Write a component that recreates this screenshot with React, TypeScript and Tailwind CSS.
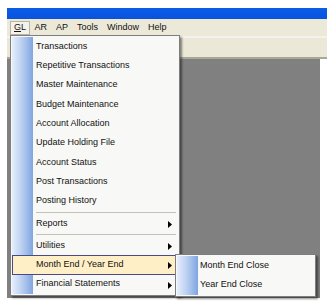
import { type ReactNode } from "react"

const FONT = { fontFamily: '"Liberation Sans", Arial, sans-serif' }

const TOP_MENUS = ["AR", "AP", "Tools", "Window", "Help"]

type Entry = { label: string; sub?: boolean; active?: boolean } | "sep"

const GL_ITEMS: Entry[] = [
  { label: "Transactions" },
  { label: "Repetitive Transactions" },
  { label: "Master Maintenance" },
  { label: "Budget Maintenance" },
  { label: "Account Allocation" },
  { label: "Update Holding File" },
  { label: "Account Status" },
  { label: "Post Transactions" },
  { label: "Posting History" },
  "sep",
  { label: "Reports", sub: true },
  "sep",
  { label: "Utilities", sub: true },
  { label: "Month End / Year End", sub: true, active: true },
  { label: "Financial Statements", sub: true },
]

function Arrow() {
  return (
    <svg width="4" height="7" viewBox="0 0 4 7" className="absolute right-[5px] top-[6px]">
      <path d="M0 0 L4 3.5 L0 7 Z" fill="#000" />
    </svg>
  )
}

function Strip() {
  return (
    <div className="absolute left-0 top-0 bottom-0 w-[21px] bg-gradient-to-r from-[#e6effc] via-[#b7cdf0] to-[#7fa5e0]" />
  )
}

function MenuPanel({ children, className }: { children: ReactNode; className: string }) {
  return (
    <div
      className={`absolute border border-[#7e7e7e] bg-[#f8f8f6] p-px shadow-[2px_2px_2px_rgba(0,0,0,0.45)] ${className}`}
    >
      <div className="relative">
        <Strip />
        <div className="relative">{children}</div>
      </div>
    </div>
  )
}

export default function App() {
  return (
    <div className="relative w-[327px] h-[306px] bg-white overflow-hidden text-[9px] text-[#111]" style={FONT}>
      <div className="ml-[7px] mt-[8px] flex flex-col">
        {/* title bar, cropped */}
        <div className="h-[11px] bg-gradient-to-b from-[#0a5de8] to-[#0a52de]" />

        {/* menu bar */}
        <div className="h-[17px] bg-[#ece9d8] flex items-center pl-[3px]">
          <div className="h-[14px] px-[3px] flex items-center border border-[#b8b4a4] bg-[#f4f2ea]">
            <span>
              <span className="underline">G</span>L
            </span>
          </div>
          {TOP_MENUS.map((m) => (
            <div key={m} className="px-[4.5px] first:pl-[5px]">
              {m}
            </div>
          ))}
        </div>

        {/* toolbar strip */}
        <div className="h-[23px] bg-[#ebe8d8] border-t-2 border-t-[#f6f1ee] border-b-2 border-b-[#a9a798]" />

        {/* client area */}
        <div className="h-[239px] w-[313px] bg-[#808080]" />
      </div>

      {/* GL dropdown */}
      <MenuPanel className="left-[10px] top-[35px] w-[170px]">
        {GL_ITEMS.map((it, i) =>
          it === "sep" ? (
            <div key={i} className="h-[3px] flex items-center pl-[24px] pr-[2px]">
              <div className="h-px w-full bg-[#c5c2b8]" />
            </div>
          ) : (
            <div
              key={i}
              className={`relative h-[19.3px] flex items-center pl-[23px] ${
                it.active ? "border border-[#4a4a86] bg-[#ffefc6]" : "border border-transparent"
              }`}
            >
              {it.label}
              {it.sub && <Arrow />}
            </div>
          ),
        )}
      </MenuPanel>

      {/* submenu */}
      <MenuPanel className="left-[175px] top-[254px] w-[141px]">
        {["Month End Close", "Year End Close"].map((s) => (
          <div key={s} className="h-[19.3px] flex items-center pl-[23px]">
            {s}
          </div>
        ))}
      </MenuPanel>
    </div>
  )
}
